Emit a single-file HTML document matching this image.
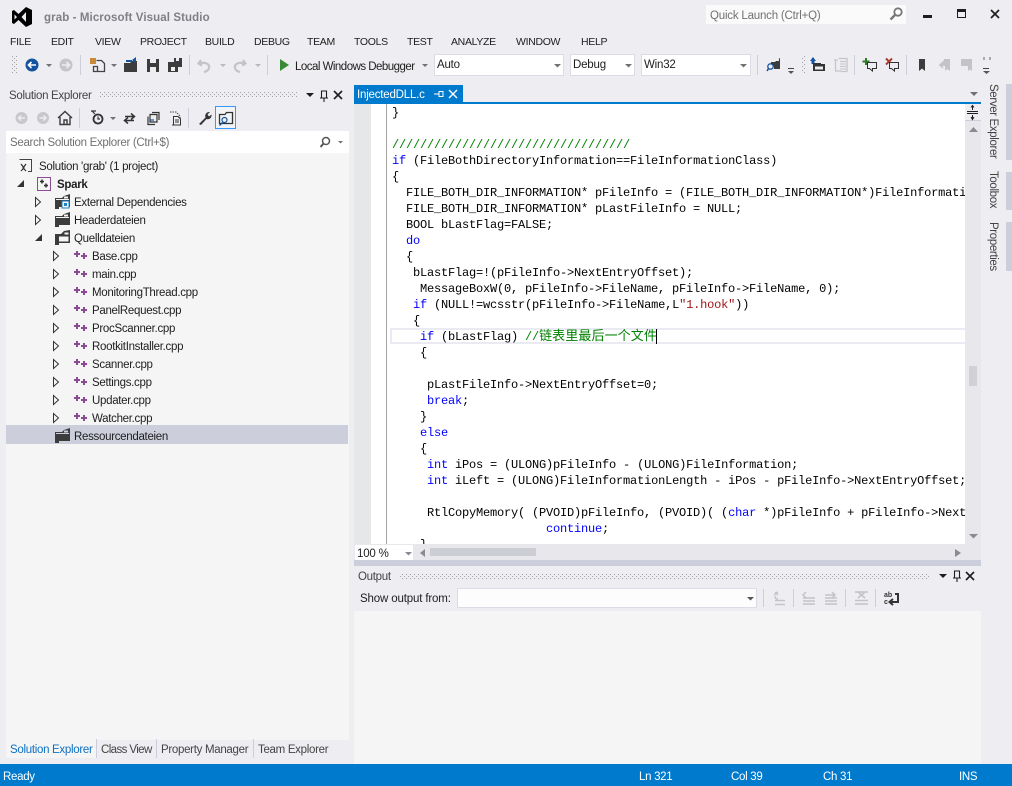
<!DOCTYPE html>
<html><head><meta charset="utf-8"><style>
html,body{margin:0;padding:0;width:1012px;height:786px;overflow:hidden;background:#eeeef2}
body{position:relative;font-family:"Liberation Sans","Noto Sans CJK SC",sans-serif;font-size:11.5px;color:#1e1e1e}
.t{position:absolute;white-space:pre;line-height:16px;letter-spacing:-.3px}
.m{position:absolute;top:34px;line-height:16px;font-size:10.5px;letter-spacing:-.32px;white-space:pre}
.b{position:absolute}
.c{position:absolute;left:392px;white-space:pre;font-family:"Liberation Mono","Noto Sans CJK SC",monospace;font-size:12px;letter-spacing:-.2px;line-height:16px;color:#000}
.c b{font-weight:normal;color:#0000ff}.c i{font-style:normal;color:#008000}.c u{text-decoration:none;color:#a31515}
.sb{position:absolute;background:#fff;border:1px solid #dcdce4;box-sizing:border-box;line-height:21px;padding-left:2px;letter-spacing:-.2px}
</style></head><body>

<div class="b" style="left:706px;top:5px;width:200px;height:19px;background:#fafafa"></div>
<div class="t" style="left:710px;top:8px;color:#717171;letter-spacing:-.2px">Quick Launch (Ctrl+Q)</div>
<div class="t" style="left:44px;top:10px;font-weight:bold;color:#7f7f85;letter-spacing:.1px">grab - Microsoft Visual Studio</div>

<div class="m" style="left:10px">FILE</div><div class="m" style="left:51px">EDIT</div><div class="m" style="left:95px">VIEW</div><div class="m" style="left:140px">PROJECT</div><div class="m" style="left:205px">BUILD</div><div class="m" style="left:254px">DEBUG</div><div class="m" style="left:307px">TEAM</div><div class="m" style="left:354px">TOOLS</div><div class="m" style="left:407px">TEST</div><div class="m" style="left:451px">ANALYZE</div><div class="m" style="left:516px">WINDOW</div><div class="m" style="left:581px">HELP</div>

<div class="t" style="left:295px;top:59px;letter-spacing:-.52px">Local Windows Debugger</div>
<div class="sb" style="left:434px;top:54px;width:130px;height:22px">Auto</div>
<div class="sb" style="left:570px;top:54px;width:65px;height:22px">Debug</div>
<div class="sb" style="left:641px;top:54px;width:110px;height:22px">Win32</div>

<!-- Solution Explorer -->
<div class="t" style="left:9px;top:88px;color:#444">Solution Explorer</div>
<div class="b" style="left:6px;top:131px;width:343px;height:609px;background:#f5f5f5"></div>
<div class="b" style="left:6px;top:131px;width:343px;height:22px;background:#fff"></div>
<div class="t" style="left:10px;top:135px;color:#717171">Search Solution Explorer (Ctrl+$)</div>
<div class="b" style="left:6px;top:425px;width:342px;height:19px;background:#cccedb"></div>
<div class="t" style="left:39px;top:159px">Solution 'grab' (1 project)</div>
<div class="t" style="left:57px;top:177px;font-weight:bold">Spark</div>
<div class="t" style="left:74px;top:195px">External Dependencies</div>
<div class="t" style="left:74px;top:213px">Headerdateien</div>
<div class="t" style="left:74px;top:231px">Quelldateien</div>
<div class="t" style="left:92px;top:249px">Base.cpp</div>
<div class="t" style="left:92px;top:267px">main.cpp</div>
<div class="t" style="left:92px;top:285px">MonitoringThread.cpp</div>
<div class="t" style="left:92px;top:303px">PanelRequest.cpp</div>
<div class="t" style="left:92px;top:321px">ProcScanner.cpp</div>
<div class="t" style="left:92px;top:339px">RootkitInstaller.cpp</div>
<div class="t" style="left:92px;top:357px">Scanner.cpp</div>
<div class="t" style="left:92px;top:375px">Settings.cpp</div>
<div class="t" style="left:92px;top:393px">Updater.cpp</div>
<div class="t" style="left:92px;top:411px">Watcher.cpp</div>
<div class="t" style="left:74px;top:429px">Ressourcendateien</div>

<!-- Bottom tabs -->
<div class="b" style="left:6px;top:740px;width:90px;height:18px;background:#f5f5f5"></div>
<div class="t" style="left:10px;top:742px;color:#0e70c0">Solution Explorer</div>
<div class="b" style="left:96px;top:739px;width:1px;height:19px;background:#cccedb"></div>
<div class="t" style="left:101px;top:742px;color:#444;letter-spacing:-.6px">Class View</div>
<div class="b" style="left:156px;top:739px;width:1px;height:19px;background:#cccedb"></div>
<div class="t" style="left:161px;top:742px;color:#444">Property Manager</div>
<div class="b" style="left:253px;top:739px;width:1px;height:19px;background:#cccedb"></div>
<div class="t" style="left:258px;top:742px;color:#444">Team Explorer</div>

<!-- Editor -->
<div class="b" style="left:354px;top:85px;width:109px;height:18px;background:#007acc"></div>
<div class="t" style="left:357px;top:87px;color:#fff;letter-spacing:-.2px">InjectedDLL.c</div>
<div class="b" style="left:354px;top:102px;width:611px;height:2px;background:#007acc"></div>
<div class="b" style="left:965px;top:102px;width:16px;height:2px;background:#007acc"></div>
<div class="b" style="left:354px;top:104px;width:611px;height:440px;background:#fff;overflow:hidden"></div>
<div class="b" style="left:354px;top:104px;width:17px;height:440px;background:#e6e7e8"></div>
<div class="b" style="left:386px;top:104px;width:1px;height:440px;background:#a5a5a5"></div>
<div class="b" style="left:390px;top:328px;width:575px;height:16px;box-sizing:border-box;border:2px solid #eaeaf2;border-right:0"></div>
<div class="b" style="left:656px;top:329px;width:1px;height:15px;background:#000"></div>

<div class="b" style="left:354px;top:104px;width:611px;height:440px;overflow:hidden">
<div style="position:absolute;left:-354px;top:-103px;width:1000px;height:700px">
<div class="c" style="top:104px">}</div>
<div class="c" style="top:136px"><i>//////////////////////////////////</i></div>
<div class="c" style="top:152px"><b>if</b> (FileBothDirectoryInformation==FileInformationClass)</div>
<div class="c" style="top:168px">{</div>
<div class="c" style="top:184px">  FILE_BOTH_DIR_INFORMATION* pFileInfo = (FILE_BOTH_DIR_INFORMATION*)FileInformation;</div>
<div class="c" style="top:200px">  FILE_BOTH_DIR_INFORMATION* pLastFileInfo = NULL;</div>
<div class="c" style="top:216px">  BOOL bLastFlag=FALSE;</div>
<div class="c" style="top:232px">  <b>do</b></div>
<div class="c" style="top:248px">  {</div>
<div class="c" style="top:264px">   bLastFlag=!(pFileInfo-&gt;NextEntryOffset);</div>
<div class="c" style="top:280px">    MessageBoxW(0, pFileInfo-&gt;FileName, pFileInfo-&gt;FileName, 0);</div>
<div class="c" style="top:296px">   <b>if</b> (NULL!=wcsstr(pFileInfo-&gt;FileName,L<u>"1.hook"</u>))</div>
<div class="c" style="top:312px">   {</div>
<div class="c" style="top:328px">    <b>if</b> (bLastFlag) <i>//<span style="font-size:13px;letter-spacing:.1px">链表里最后一个文件</span></i></div>
<div class="c" style="top:344px">    {</div>
<div class="c" style="top:376px">     pLastFileInfo-&gt;NextEntryOffset=0;</div>
<div class="c" style="top:392px">     <b>break</b>;</div>
<div class="c" style="top:408px">    }</div>
<div class="c" style="top:424px">    <b>else</b></div>
<div class="c" style="top:440px">    {</div>
<div class="c" style="top:456px">     <b>int</b> iPos = (ULONG)pFileInfo - (ULONG)FileInformation;</div>
<div class="c" style="top:472px">     <b>int</b> iLeft = (ULONG)FileInformationLength - iPos - pFileInfo-&gt;NextEntryOffset;</div>
<div class="c" style="top:504px">     RtlCopyMemory( (PVOID)pFileInfo, (PVOID)( (<b>char</b> *)pFileInfo + pFileInfo-&gt;NextEntryOffset ),</div>
<div class="c" style="top:520px">                      <b>continue</b>;</div>
<div class="c" style="top:536px">    }</div>
</div></div>

<!-- scrollbars -->
<div class="b" style="left:965px;top:104px;width:16px;height:440px;background:#e8e8ec"></div>
<div class="b" style="left:965px;top:104px;width:16px;height:17px;background:#eeeef2;border-bottom:1px solid #cccedb;box-sizing:border-box"></div>
<div class="b" style="left:969px;top:366px;width:8px;height:20px;background:#d0d1d7"></div>
<div class="b" style="left:354px;top:544px;width:627px;height:18px;background:#e8e8ec"></div>
<div class="b" style="left:355px;top:545px;width:58px;height:15px;background:#fff"></div>
<div class="t" style="left:357px;top:546px;letter-spacing:-.2px">100 %</div>
<div class="b" style="left:430px;top:548px;width:106px;height:8px;background:#cdced4"></div>
<div class="b" style="left:354px;top:560px;width:627px;height:6px;background:#cccedb"></div>

<!-- Output -->
<div class="t" style="left:358px;top:569px;color:#444">Output</div>
<div class="t" style="left:360px;top:591px;letter-spacing:-.15px">Show output from:</div>
<div class="b" style="left:457px;top:588px;width:300px;height:20px;background:#fdfdfd;border:1px solid #dcdce6;box-sizing:border-box"></div>
<div class="b" style="left:354px;top:611px;width:627px;height:153px;background:#f5f5f5"></div>

<!-- Status -->
<div class="b" style="left:0;top:764px;width:1012px;height:22px;background:#007acc"></div>
<div class="t" style="left:3px;top:769px;color:#fff">Ready</div>
<div class="t" style="left:639px;top:769px;color:#fff">Ln 321</div>
<div class="t" style="left:731px;top:769px;color:#fff">Col 39</div>
<div class="t" style="left:823px;top:769px;color:#fff">Ch 31</div>
<div class="t" style="left:959px;top:769px;color:#fff">INS</div>

<!-- Right rail -->
<div class="b" style="left:1006px;top:84px;width:6px;height:76px;background:#cccedb"></div>
<div class="b" style="left:1006px;top:172px;width:6px;height:38px;background:#cccedb"></div>
<div class="b" style="left:1006px;top:222px;width:6px;height:49px;background:#cccedb"></div>
<div class="t" style="left:985px;top:84px;writing-mode:vertical-rl;line-height:16px;color:#444;letter-spacing:-.36px">Server Explorer</div>
<div class="t" style="left:985px;top:171px;writing-mode:vertical-rl;line-height:16px;color:#444;letter-spacing:-.36px">Toolbox</div>
<div class="t" style="left:985px;top:222px;writing-mode:vertical-rl;line-height:16px;color:#444;letter-spacing:-.36px">Properties</div>

<svg class="b" style="left:0;top:0" width="1012" height="786" viewBox="0 0 1012 786">
<defs>
<pattern id="g" width="4" height="4" patternUnits="userSpaceOnUse"><rect width="1" height="1" fill="#a0a0a6"/><rect x="2" y="2" width="1" height="1" fill="#a0a0a6"/></pattern>
<g id="cpp" fill="#8a4a94"><path d="M2 0h2v2h2v2h-2v2h-2v-2h-2v-2h2z"/><path d="M9 2h2v2h2v2h-2v2h-2v-2h-2v-2h2z"/></g>
<path id="op" d="M.5 .5L5.5 5L.5 9.5Z" fill="#f5f5f5" stroke="#333"/>
<path id="cl" d="M7 0V7H0Z" fill="#333"/>
<g id="fo"><path d="M0 4H7L9 2L15 0V13H4V15H0Z" fill="#3c3c3c"/><path d="M1 5.500H14" stroke="#f5f5f5"/><path d="M9 2.500h4v2h-4z" fill="#f5f5f5"/></g>
</defs>

<!-- logo -->
<path fill-rule="evenodd" fill="#000" d="M26 7L32 10V24L26 27L18.500 20L14 24L12 23V11L14 10L18.500 14ZM26 12L21.500 17L26 22ZM14.500 14.500V19.500L17 17Z"/>

<!-- window controls -->
<circle cx="898" cy="12" r="3.700" fill="none" stroke="#777" stroke-width="1.800"/><path d="M895 15L890.500 19.500" stroke="#777" stroke-width="2.400"/>
<rect x="923" y="15" width="9" height="3" fill="#1e1e1e"/>
<rect x="957.500" y="9.500" width="8" height="8" fill="none" stroke="#1e1e1e"/><rect x="957" y="9" width="9" height="3" fill="#1e1e1e"/>
<path d="M991 10L999 18M999 10L991 18" stroke="#1e1e1e" stroke-width="1.700"/>

<!-- toolbar -->
<rect x="12" y="56" width="5" height="17" fill="url(#g)"/>
<rect x="801" y="56" width="4" height="17" fill="url(#g)"/>
<circle cx="32" cy="65" r="6.500" fill="#14539f"/><path d="M36 65H29M31.500 62L28.500 65L31.500 68" stroke="#fff" stroke-width="1.600" fill="none"/>
<path d="M46 64h6l-3 3z" fill="#717171"/>
<circle cx="66" cy="65" r="6.500" fill="#c6c6ca"/><path d="M62 65H69M66.500 62L69.500 65L66.500 68" stroke="#eee" stroke-width="1.600" fill="none"/>
<g fill="#cccedb"><rect x="80" y="55" width="1" height="20"/><rect x="189" y="55" width="1" height="20"/><rect x="267" y="55" width="1" height="20"/><rect x="757" y="55" width="1" height="20"/><rect x="854" y="55" width="1" height="20"/><rect x="906" y="55" width="1" height="20"/></g>
<rect x="90" y="58" width="6" height="6" fill="#c98a3a"/>
<path d="M96.500 60.500H101.500L104.500 63.500V71.500H97.500V66.500H93.500V71.500H97.500" fill="none" stroke="#444" stroke-width="1.300"/>
<path d="M111 64h6l-3 3z" fill="#717171"/>
<path d="M124 63H130L132 61H137V72H124Z" fill="#3c3c3c"/><path d="M132 60L136 57V63Z" fill="#14539f"/><path d="M126 60h6v2h-6z" fill="#14539f"/>
<path d="M147 59H159V72H147Z" fill="#3c3c3c"/><rect x="150" y="59" width="6" height="4" fill="#eeeef2"/><rect x="150" y="67" width="6" height="5" fill="#eeeef2"/>
<path d="M174 58H182V67H178V72H168V62H174Z" fill="#3c3c3c"/><rect x="176" y="58" width="3" height="3" fill="#eeeef2"/><rect x="171" y="67" width="4" height="4" fill="#eeeef2"/>
<path d="M201 60L198.500 63.500L202 65.500M199 63.500C205 61.500 210 64 209 68C208.500 70 206.500 71.500 204 72" fill="none" stroke="#c4c4c8" stroke-width="2.200"/>
<path d="M220 64h6l-3 3z" fill="#b9b9bd"/>
<path d="M243 60L245.500 63.500L242 65.500M245 63.500C239 61.500 234 64 235 68C235.500 70 237.500 71.500 240 72" fill="none" stroke="#c4c4c8" stroke-width="2.200"/>
<path d="M255 64h6l-3 3z" fill="#b9b9bd"/>
<path d="M280 59V71L289 65Z" fill="#388a34"/>
<path d="M422 64h6l-3 3z" fill="#717171"/>
<path d="M554 64h7l-3.500 3.500z" fill="#717171"/><path d="M625 64h7l-3.500 3.500z" fill="#717171"/><path d="M740 64h7l-3.500 3.500z" fill="#717171"/>
<path d="M771 62H775L777 60L780 58V69H774V66H771Z" fill="#3c3c3c"/><rect x="776" y="59" width="3" height="2" fill="#eeeef2"/><circle cx="770.500" cy="66.500" r="2.700" fill="#eeeef2" stroke="#14539f" stroke-width="1.300"/><path d="M768.500 68.500L767 71" stroke="#14539f" stroke-width="1.500"/>
<path d="M788 68.500h6" stroke="#444"/><path d="M788 71h6l-3 3z" fill="#555"/>
<path d="M813 57L816 61H814.500V64H811.500V61H810Z" fill="#14539f"/>
<path d="M813 63H821V64H825V71H813Z" fill="#333"/><rect x="815" y="66.500" width="8" height="3" fill="#eeeef2"/>
<path d="M834 60H838M835.500 60V71H841M839 58.500H847V71.500H841" fill="none" stroke="#c4c4c8" stroke-width="1.200"/><path d="M840 61.500h6M840 64h6M840 66.500h6M840 69h6" stroke="#c4c4c8"/>
<path d="M866 58v7M862.500 61.500h7" stroke="#2d7a28" stroke-width="2"/>
<path d="M868.500 62.500H876.500V68.500H872.500V71L869.500 68.500H867.500V62.500Z" fill="#eeeef2" stroke="#333"/>
<path d="M886 58.500l6 6M892 58.500l-6 6" stroke="#a83a30" stroke-width="2"/>
<path d="M891.500 62.500H898.500V68.500H894.500V71L891.500 68.500H889.500V62.500Z" fill="#eeeef2" stroke="#333"/>
<path d="M919 59H925V71L922 68.500L919 71Z" fill="#3c3c3c"/>
<path d="M944 59H950V71L947 69L945 71V66H939L944 60Z" fill="#c4c4c8"/>
<path d="M945 65H941M943 62L940 65L943 68" fill="none" stroke="#c4c4c8" stroke-width="1.500"/>
<path d="M961 59H972V71L970 69.500L968 71V66H961Z" fill="#c4c4c8"/>
<path d="M984 57v3M990 57v3" stroke="#666"/><path d="M983 68.500h6" stroke="#444"/><path d="M983 71h7l-3.500 3z" fill="#555"/>
<path d="M970 92h8l-4 4z" fill="#717171"/>

<!-- solution explorer header -->
<rect x="100" y="92" width="198" height="6" fill="url(#g)"/>
<path d="M306 93h8l-4 4z" fill="#1e1e1e"/>
<path d="M321.500 91H326.500V98H321.500ZM320 98H328M324 98V102" fill="none" stroke="#1e1e1e" stroke-width="1.100"/>
<path d="M334 91L342 99M342 91L334 99" stroke="#1e1e1e" stroke-width="1.600"/>

<!-- solution toolbar -->
<circle cx="21.500" cy="118" r="6" fill="#c8c8cc"/><path d="M25 118H19M21 115.500L18.500 118L21 120.500" stroke="#eee" stroke-width="1.400" fill="none"/>
<circle cx="43" cy="118" r="6" fill="#c8c8cc"/><path d="M39.500 118H46M43.500 115.500L46 118L43.500 120.500" stroke="#eee" stroke-width="1.400" fill="none"/>
<path d="M58 118L65 111.500L72 118M60 117V124.500H70V117M64 124.500V120H67V124.500" fill="none" stroke="#3c3c3c" stroke-width="1.400"/>
<rect x="79" y="108" width="1" height="20" fill="#cccedb"/><rect x="188" y="108" width="1" height="20" fill="#cccedb"/>
<circle cx="98" cy="119" r="4.500" fill="none" stroke="#333" stroke-width="1.800"/><path d="M98 116.500V119H100M91 111H96M92 111L95 114" stroke="#333" stroke-width="1.200" fill="none"/>
<path d="M110 117h6l-3 3z" fill="#717171"/>
<path d="M125 116.500H134M131 113.500L134.500 116.500L131 119.500M134 120.500H125M128 117.500L124.500 120.500L128 123.500" fill="none" stroke="#333" stroke-width="1.500"/>
<path d="M150 114.500H157V122H150Z M148 116.500V124.500H155M152 112.500H159V120" fill="none" stroke="#333" stroke-width="1.200"/><path d="M150 120h4" stroke="#14539f" stroke-width="1.200"/>
<path d="M170 112h6l4 4v9h-8" fill="none" stroke="#444" stroke-width="1" stroke-dasharray="1.500 1"/><path d="M173.500 116.500H178L180.500 119V125H173.500Z M175 120H179M175 122H179" fill="#f0f0f3" stroke="#333"/>
<path d="M199 124L205.500 117.500C204.500 114.500 206.500 111.500 210 112L207.500 114.500L209 116.500L211.500 114.500C212 118 209 120 206.500 119L201 125Z" fill="#333"/>
<rect x="215.500" y="106.500" width="20" height="22" fill="#f2f3f6" stroke="#3399ff"/>
<path d="M219.500 114.500V123.500H232.500V112.500H226.500L225 114.500Z" fill="none" stroke="#333" stroke-width="1.300"/>
<circle cx="224.500" cy="120" r="2.500" fill="#f5f5f5" stroke="#14539f" stroke-width="1.200"/><path d="M222.500 122.500L219.500 125.500" stroke="#14539f" stroke-width="1.400"/>
<circle cx="326" cy="141" r="3.500" fill="none" stroke="#555" stroke-width="1.500"/><path d="M323.500 143.500L320.500 147" stroke="#555" stroke-width="2"/>
<path d="M338 141h5l-2.500 2.500z" fill="#717171"/>

<!-- tree -->
<path d="M19.500 159.500H31.500V171.500H26" fill="none" stroke="#444"/><rect x="19" y="162" width="9" height="10" fill="#f5f5f5"/><path d="M21 164l3 4-3 3M26 164l-3 4 3 3" fill="none" stroke="#333" stroke-width="1.200"/>
<use href="#cl" x="17" y="180"/>
<rect x="37.500" y="177.500" width="13" height="13" fill="#f5f5f5" stroke="#8a4a94"/><path d="M42 179.500v4M40 181.500h4M46 183.500v4M44 185.500h4" stroke="#333" stroke-width="1.500"/>
<use href="#op" x="35" y="197"/><use href="#fo" x="55" y="194"/><rect x="62" y="201" width="7" height="7" fill="#f5f5f5" stroke="#1e80c8"/><rect x="64" y="203" width="3" height="3" fill="#1e80c8"/>
<use href="#op" x="35" y="215"/><use href="#fo" x="55" y="212"/>
<use href="#cl" x="35" y="234"/><path d="M55 234H61L64 231L70 230V243H59V245H55Z" fill="#3c3c3c"/><path d="M59 236.500H68.500V241.500H59Z" fill="#f5f5f5"/><path d="M64.500 232.500h4v2h-4z" fill="#f5f5f5"/>
<g id="rows">
<use href="#op" x="53" y="251"/><use href="#cpp" x="74" y="251"/>
<use href="#op" x="53" y="269"/><use href="#cpp" x="74" y="269"/>
<use href="#op" x="53" y="287"/><use href="#cpp" x="74" y="287"/>
<use href="#op" x="53" y="305"/><use href="#cpp" x="74" y="305"/>
<use href="#op" x="53" y="323"/><use href="#cpp" x="74" y="323"/>
<use href="#op" x="53" y="341"/><use href="#cpp" x="74" y="341"/>
<use href="#op" x="53" y="359"/><use href="#cpp" x="74" y="359"/>
<use href="#op" x="53" y="377"/><use href="#cpp" x="74" y="377"/>
<use href="#op" x="53" y="395"/><use href="#cpp" x="74" y="395"/>
<use href="#op" x="53" y="413"/><use href="#cpp" x="74" y="413"/>
</g>
<g transform="translate(55 428)"><path d="M0 4H7L9 2L15 0V13H4V15H0Z" fill="#3c3c3c"/><path d="M1 5.500H14" stroke="#cccedb"/><path d="M9 2.500h4v2h-4z" fill="#cccedb"/></g>

<!-- tab pin/close -->
<path d="M434 94H439M439 91.500H443V96.500H439Z" fill="none" stroke="#fff"/>
<path d="M449 90L457 98M457 90L449 98" stroke="#fff" stroke-width="1.400"/>

<!-- splitter & arrows -->
<path d="M967 111.500H978M967 113.500H978" stroke="#1e1e1e" stroke-width="1"/>
<path d="M972.500 106V110M971 107.500L972.500 105.500L974 107.500M972.500 115V119M971 117L972.500 119.500L974 117" stroke="#1e1e1e" fill="none"/>
<path d="M969 132L973.500 127L978 132Z" fill="#8a8a92"/>
<path d="M969 534h9l-4.500 4.500z" fill="#8a8a92"/>
<path d="M425 549V557L420 553Z" fill="#8a8a92"/>
<path d="M955 549V557L961 553Z" fill="#8a8a92"/>
<path d="M405 552h7l-3.500 3.500z" fill="#8a8a92"/>

<!-- output -->
<rect x="399" y="573" width="531" height="6" fill="url(#g)"/>
<path d="M939 574h8l-4 4z" fill="#1e1e1e"/>
<path d="M954.500 571H959.500V578H954.500ZM953 578H961M957 578V582" fill="none" stroke="#1e1e1e" stroke-width="1.100"/>
<path d="M966 572L974 580M974 572L966 580" stroke="#1e1e1e" stroke-width="1.600"/>
<path d="M747 597h7l-3.500 3.500z" fill="#555"/>
<g fill="#cccedb"><rect x="763" y="589" width="1" height="18"/><rect x="793" y="589" width="1" height="18"/><rect x="845" y="589" width="1" height="18"/><rect x="875" y="589" width="1" height="18"/></g>
<path d="M775 592.500h3M774 595l2-2 2 2M776 596c-2 2 0 3 2 3M775 600.500h10M775 604.500h10" fill="none" stroke="#c4c4c8" stroke-width="1.400"/>
<path d="M803 598H815M803 601H815M803 604H815M806 592L803 595L806 598" fill="none" stroke="#c4c4c8" stroke-width="1.500"/>
<path d="M825 598H837M825 601H837M825 604H837M832 592L835 595L832 598M825 595H835" fill="none" stroke="#c4c4c8" stroke-width="1.500"/>
<path d="M855 592H868M855 604H868M855 600.500H868M858 592L865 598M865 592L858 598" fill="none" stroke="#c4c4c8" stroke-width="1.600"/>
<text x="884" y="597" font-family="Liberation Sans" font-size="7" font-weight="bold" fill="#333">ab</text>
<text x="884" y="604" font-family="Liberation Sans" font-size="7" font-weight="bold" fill="#333">c</text>
<path d="M895 594H898V602H890M893 599L889.500 602L893 605" fill="none" stroke="#333" stroke-width="2"/>
</svg>
</body></html>
